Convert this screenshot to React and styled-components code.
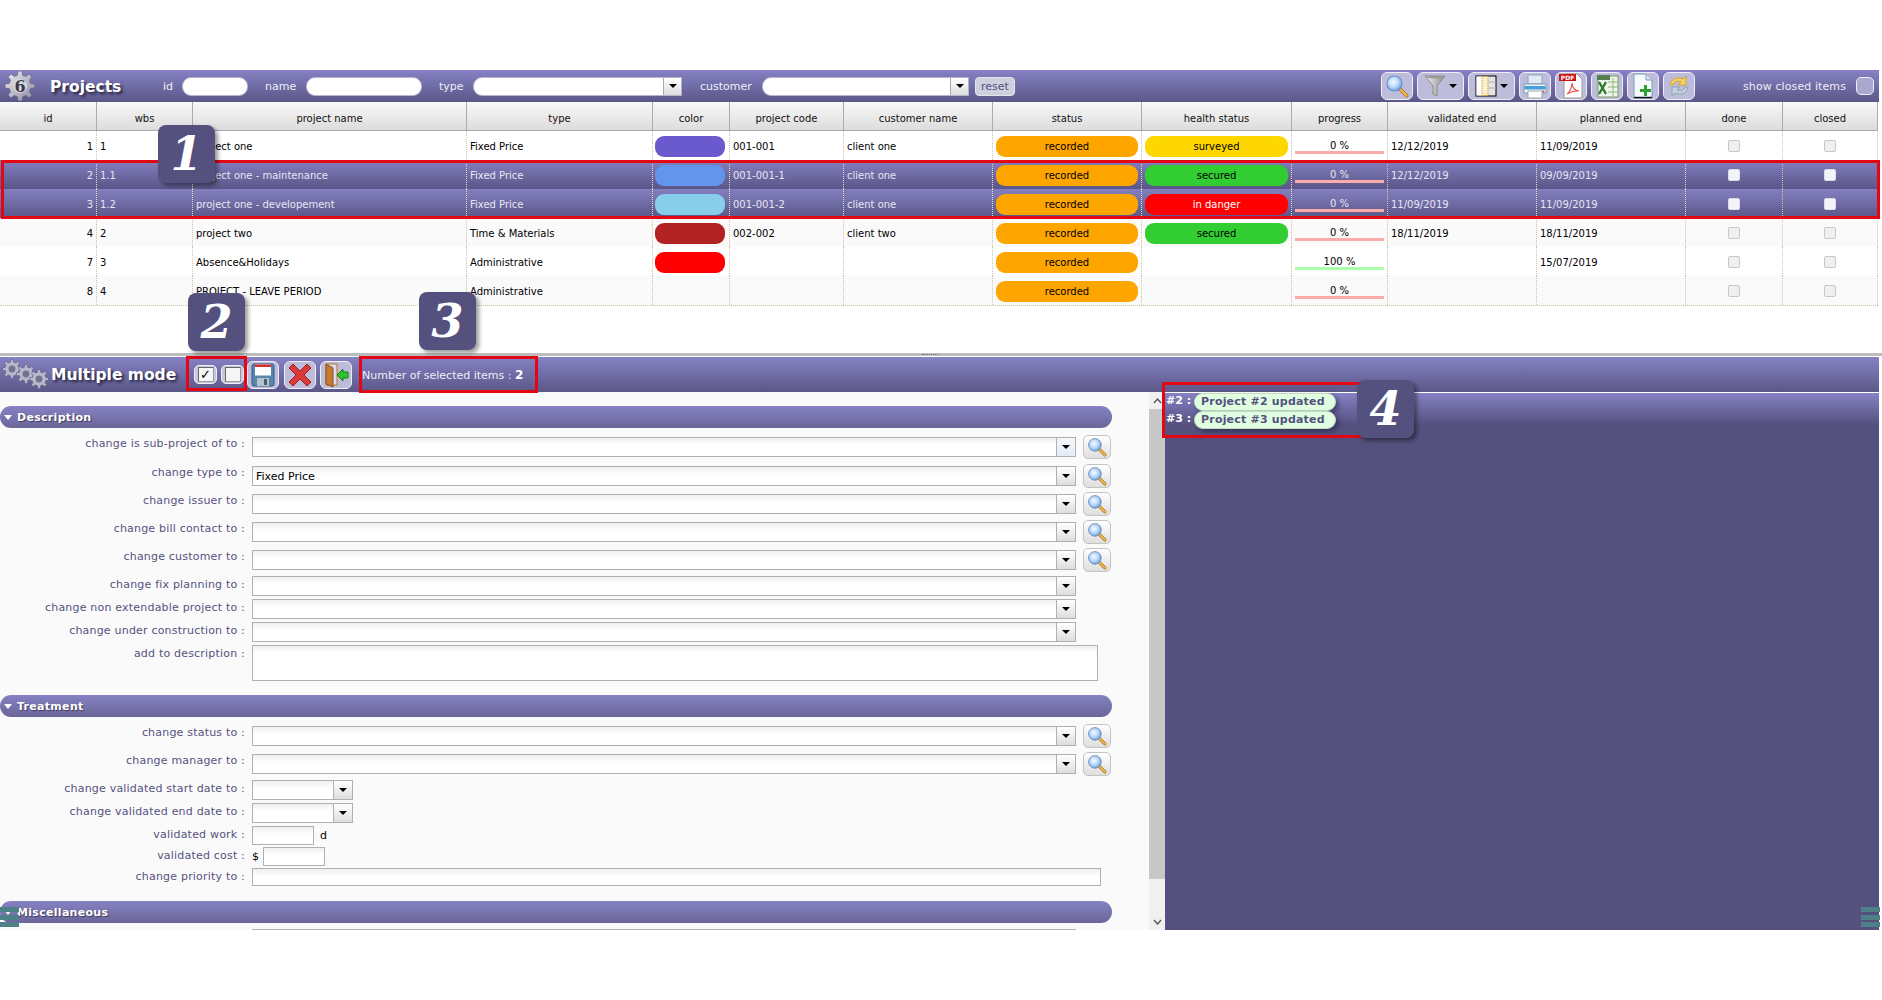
import React from 'react';
import styled, { createGlobalStyle } from 'styled-components';

const GlobalStyle = createGlobalStyle`
  html, body {
    margin: 0;
    background: #fff;
    overflow: hidden;
  }
  * { box-sizing: border-box; }
`;

const COLUMNS = '97px 96px 274px 186px 77px 114px 149px 149px 150px 96px 149px 149px 97px 95px';
const BAR = 'linear-gradient(#8682c4, #5b5788)';

const Page = styled.div`
  position: relative;
  width: 1882px;
  height: 1000px;
  padding-top: 70px;
  overflow: hidden;
  font-family: "DejaVu Sans", Verdana, sans-serif;
  font-size: 10px;
  color: #000;
`;

/* top toolbar */
const Toolbar = styled.div`
  display: flex;
  align-items: center;
  width: 1879px;
  height: 32px;
  background: ${BAR};
  color: #eeeef8;
`;

const Title = styled.div`
  margin-left: ${p => p.$left}px;
  padding-top: ${p => p.$drop || 0}px;
  width: ${p => p.$width}px;
  flex: none;
  font-size: ${p => p.$size}px;
  font-weight: bold;
  color: #fff;
  text-shadow: 2px 2px 3px #22203a;
  white-space: nowrap;
`;

const FilterLabel = styled.span`
  margin-left: ${p => p.$left}px;
  width: ${p => p.$width}px;
  flex: none;
  font-size: 11px;
`;

const FilterInput = styled.div`
  width: ${p => p.$width}px;
  height: 19px;
  flex: none;
  display: flex;
  justify-content: flex-end;
  background: #fff;
  border: 1px solid #b4b2cc;
  border-radius: ${p => (p.$select ? '9px 0 0 9px' : '9px')};
  overflow: hidden;
`;

const FilterArrow = styled.div`
  width: 18px;
  display: flex;
  align-items: center;
  justify-content: center;
  background: linear-gradient(#fff, #ddd);
  border-left: 1px solid #aaa;
`;

const Arrow = styled.i`
  display: block;
  width: 0;
  height: 0;
  border-left: 4px solid transparent;
  border-right: 4px solid transparent;
  border-top: 4px solid #000;
`;

const ResetButton = styled.div`
  margin-left: 6px;
  width: 40px;
  height: 19px;
  flex: none;
  display: flex;
  align-items: center;
  justify-content: center;
  background: #cfcfe0;
  color: #55527f;
  border: 1px solid #e4e4f0;
  border-radius: 4px;
  font-size: 11px;
`;

const RightTools = styled.div`
  display: flex;
  align-items: center;
  gap: 4px;
  margin-left: auto;
  padding-right: 5px;
`;

const ToolButton = styled.div`
  width: ${p => p.$width || 32}px;
  height: 28px;
  flex: none;
  display: flex;
  align-items: center;
  justify-content: center;
  gap: 3px;
  background: #bebcdb;
  border: 1px solid #eeeef8;
  border-radius: 6px;
`;

const ShowClosed = styled.span`
  margin-left: 44px;
  width: 103px;
  font-size: 11px;
  letter-spacing: .1px;
  white-space: nowrap;
`;

const BigCheck = styled.div`
  margin-left: 6px;
  width: 18px;
  height: 18px;
  background: #aaa8cf;
  border: 1px solid #eeeef8;
  border-radius: 5px;
`;

/* grid */
const GridArea = styled.div`
  height: 251px;
  width: 1878px;
`;

const Row = styled.div`
  display: grid;
  grid-template-columns: ${COLUMNS};
  height: 29px;
  background: ${p => (p.$selected ? 'linear-gradient(#8480c0, #5a5688)' : p.$even ? '#fafafa' : '#fff')};
  color: ${p => (p.$selected ? '#e6e6f2' : '#000')};
  &:last-child { border-bottom: 1px dotted #cfc3a5; height: 30px; }
`;

const HeaderRow = styled.div`
  display: grid;
  grid-template-columns: ${COLUMNS};
  height: 29px;
  background: linear-gradient(#f9f9f9, #dcdcdc);
  border-bottom: 1px solid #aaa;
`;

const HeaderCell = styled.div`
  display: flex;
  align-items: center;
  justify-content: center;
  padding-top: 4px;
  border-right: 1px solid #aaa;
  color: #111;
`;

const Cell = styled.div`
  display: flex;
  align-items: center;
  justify-content: ${p => p.$align || 'flex-start'};
  padding: 2px 3px 0 3px;
  border-right: 1px dotted ${p => (p.$light ? '#e6dcc0' : '#cfc3a5')};
  white-space: nowrap;
  min-width: 0;
`;

const Pill = styled.div`
  width: 100%;
  height: 21px;
  margin-top: -1px;
  margin-left: ${p => (p.$wide ? -1 : 0)}px;
  border-radius: 9px;
  display: flex;
  align-items: center;
  justify-content: center;
  background: ${p => p.$color};
  color: ${p => p.$text || '#000'};
`;

const ProgressCell = styled.div`
  display: flex;
  flex-direction: column;
  justify-content: flex-end;
  align-items: stretch;
  padding: 0 3px 6px 3px;
  border-right: 1px dotted #cfc3a5;
  text-align: center;
  line-height: 12px;
`;

const ProgressBar = styled.div`
  height: 3px;
  margin-top: -1px;
  background: ${p => (p.$full ? '#aaffaa' : '#ffaaaa')};
`;

const CheckCell = styled.div`
  display: flex;
  align-items: center;
  justify-content: center;
  border-right: 1px dotted #cfc3a5;
`;

const TinyCheck = styled.div`
  width: 12px;
  height: 12px;
  background: ${p => (p.$selected ? '#f4f4f8' : '#efefef')};
  border: 1px solid ${p => (p.$selected ? '#dcdcea' : '#c8c8c8')};
  border-radius: 2px;
`;

/* splitter */
const Splitter = styled.div`
  height: 4px;
  display: flex;
  align-items: center;
  padding-left: 922px;
  background: #bdbdbd;
  border-bottom: 1px solid #fff;
`;

const HandleDots = styled.div`
  width: 16px;
  height: 1px;
  border-top: 1px dotted #777;
`;

/* lower header */
const ModeBar = styled.div`
  display: flex;
  align-items: center;
  width: 1879px;
  height: 35px;
  background: ${BAR};
  color: #eeeef8;
`;

const SmallCheckButton = styled.div`
  width: 23px;
  height: 19px;
  flex: none;
  margin-left: ${p => p.$left}px;
  display: flex;
  align-items: center;
  justify-content: center;
  background: #c8c6e0;
  border: 1px solid #eeeef8;
  border-radius: 5px;
`;

const SmallCheckBox = styled.div`
  width: 16px;
  height: 15px;
  display: flex;
  align-items: center;
  justify-content: center;
  background: #f6f6f6;
  border: 1px solid #999;
  border-top-color: #666;
  border-left-color: #666;
  font-size: 13px;
  font-weight: bold;
  line-height: 1;
  color: #000;
`;

const ModeButton = styled(ToolButton)`
  margin-left: ${p => p.$left}px;
`;

const SelectedCount = styled.div`
  margin-left: 10px;
  font-size: 11px;
  white-space: nowrap;
  b { font-size: 12px; color: #fff; }
`;

/* lower body */
const Body = styled.div`
  display: flex;
  width: 1879px;
  height: 538px;
`;

const FormPanel = styled.div`
  width: 1149px;
  flex: none;
  padding-top: 14px;
  background: #fafafa;
  overflow: hidden;
`;

const SectionBar = styled.div`
  width: 1112px;
  height: 22px;
  margin-bottom: ${p => p.$after || 9}px;
  display: flex;
  align-items: center;
  padding-left: 4px;
  gap: 5px;
  background: linear-gradient(#8682c4, #6a6698);
  border-radius: 11px;
  color: #fff;
  font-size: 11px;
  font-weight: bold;
  letter-spacing: .3px;
  text-shadow: 1px 1px 1px #3c3a60;
`;

const SectionArrow = styled.i`
  display: block;
  width: 0;
  height: 0;
  border-left: 4px solid transparent;
  border-right: 4px solid transparent;
  border-top: 5px solid #fff;
`;

const FormRow = styled.div`
  display: flex;
  align-items: flex-start;
  height: ${p => p.$h}px;
  margin-bottom: ${p => p.$after || 0}px;
`;

const FieldLabel = styled.div`
  width: 245px;
  margin-right: 7px;
  padding-top: ${p => (p.$tight ? 2 : 0)}px;
  flex: none;
  text-align: right;
  color: #55527f;
  font-size: 11px;
  letter-spacing: .2px;
  line-height: 13px;
  white-space: nowrap;
`;

const FieldBox = styled.div`
  width: ${p => p.$width}px;
  height: ${p => p.$height || 20}px;
  flex: none;
  display: flex;
  align-items: stretch;
  background: linear-gradient(#efefef, #fff 7px);
  border: 1px solid #b0b0b0;
`;

const FieldValue = styled.div`
  flex: 1;
  padding: 2px 3px 0;
  font-size: 11px;
  line-height: 16px;
`;

const FieldArrow = styled.div`
  width: 19px;
  flex: none;
  display: flex;
  align-items: center;
  justify-content: center;
  border-left: 1px solid #b0b0b0;
  background: ${p => (p.$hover ? 'linear-gradient(#f4f8fc, #e2ecf6)' : 'linear-gradient(#fff, #ddd)')};
`;

const SearchButton = styled.div`
  width: 28px;
  height: 24px;
  margin: -2px 0 0 7px;
  flex: none;
  display: flex;
  align-items: center;
  justify-content: center;
  background: linear-gradient(#fff, #dedede);
  border: 1px solid #c4c4c4;
  border-radius: 5px;
`;

const Unit = styled.span`
  margin-left: ${p => p.$left}px;
  margin-right: ${p => p.$right || 0}px;
  padding-top: 2px;
  font-size: 11px;
  line-height: 15px;
`;

/* scroller + messages */
const ScrollBar = styled.div`
  width: 16px;
  flex: none;
  display: flex;
  flex-direction: column;
  background: #f0f0f0;
`;

const ScrollEnd = styled.div`
  height: 17px;
  display: flex;
  align-items: center;
  justify-content: center;
`;

const ScrollThumb = styled.div`
  height: 470px;
  background: #c8c8c8;
`;

const ScrollSpace = styled.div`
  flex: 1;
`;

const MessagePanel = styled.div`
  flex: 1;
  padding-left: 1px;
  background: linear-gradient(#8682c4, #54517f 32px);
  border-top: 1px solid #fff;
  color: #fff;
`;

const MessageRow = styled.div`
  display: flex;
  align-items: flex-start;
  height: 18px;
  font-size: 11px;
  font-weight: bold;
`;

const MessageId = styled.span`
  width: 28px;
  flex: none;
  padding-top: 1px;
  line-height: 13px;
`;

const MessagePill = styled.div`
  width: 142px;
  height: 18px;
  padding-left: 6px;
  background: #e0ffe0;
  color: #54517f;
  border: 1px solid #c4d8c4;
  border-radius: 9px;
  letter-spacing: .2px;
  line-height: 16px;
  box-shadow: 3px 3px 5px rgba(30, 28, 60, .5);
  white-space: nowrap;
`;

/* things drawn over the page */
const Mark = styled.div`
  position: absolute;
  left: ${p => p.$x}px;
  top: ${p => p.$y}px;
  width: ${p => p.$w}px;
  height: ${p => p.$h}px;
  border: 3px solid #e30613;
`;

const Badge = styled.div`
  position: absolute;
  left: ${p => p.$x}px;
  top: ${p => p.$y}px;
  width: 57px;
  height: 58px;
  display: flex;
  align-items: center;
  justify-content: center;
  background: #54517f;
  border-radius: 8px;
  box-shadow: 3px 3px 4px rgba(0, 0, 0, .4);
  color: #fff;
  font-family: "DejaVu Serif", "Liberation Serif", serif;
  font-size: 46px;
  font-weight: bold;
  font-style: italic;
  line-height: 1;
`;

const TealLines = styled.div`
  position: absolute;
  left: ${p => p.$x}px;
  top: 907px;
  width: 19px;
  height: 20px;
  display: flex;
  flex-direction: column;
  justify-content: space-between;
  i {
    display: block;
    height: 5px;
    background: #4d8089;
  }
`;

/* icons */
const gearPath = (cx, cy, outer, inner, teeth) => {
  const pts = [];
  const step = (Math.PI * 2) / teeth;
  for (let i = 0; i < teeth; i++) {
    const a = i * step;
    [[-0.3, inner], [-0.17, outer], [0.17, outer], [0.3, inner]].forEach(([o, r]) => {
      pts.push(`${(cx + Math.cos(a + o * step) * r).toFixed(1)} ${(cy + Math.sin(a + o * step) * r).toFixed(1)}`);
    });
  }
  return `M${pts.join('L')}Z`;
};

const GearLogo = () => (
  <svg width="32" height="30" viewBox="0 0 32 30" style={{ flex: 'none', marginLeft: 4 }}>
    <defs>
      <linearGradient id="gearFill" x1="0" y1="0" x2="1" y2="1">
        <stop offset="0" stopColor="#eeeef6" />
        <stop offset="1" stopColor="#8a889f" />
      </linearGradient>
    </defs>
    <path d={gearPath(16, 15, 15, 11, 8)} fill="url(#gearFill)" stroke="#5c5a78" strokeWidth=".6" />
    <circle cx="16" cy="15" r="7" fill="#d8d7e4" />
    <text x="16" y="21" textAnchor="middle" fontSize="16" fontWeight="bold" fontFamily="DejaVu Serif, serif" fill="#3a3840">6</text>
  </svg>
);

const TripleGear = () => (
  <svg width="48" height="32" viewBox="0 0 48 32" style={{ flex: 'none', marginLeft: 2 }}>
    {[[10, 10], [24, 15], [37, 20]].map(([x, y]) => (
      <g key={x}>
        <path d={gearPath(x, y, 9.5, 7, 8)} fill="#b8b8cc" stroke="#5c5a78" strokeWidth=".6" />
        <circle cx={x} cy={y} r="3.4" fill="#74728f" />
      </g>
    ))}
  </svg>
);

const Magnifier = ({ size = 24 }) => (
  <svg width={size} height={size} viewBox="0 0 24 24">
    <defs>
      <radialGradient id="lens" cx=".42" cy=".4" r=".65">
        <stop offset="0" stopColor="#f6fbff" />
        <stop offset=".55" stopColor="#b8d6f8" />
        <stop offset="1" stopColor="#5a90e0" />
      </radialGradient>
    </defs>
    <line x1="14.5" y1="14.5" x2="21.5" y2="21.5" stroke="#a8701c" strokeWidth="3.6" strokeLinecap="round" />
    <line x1="14.5" y1="14.5" x2="21.5" y2="21.5" stroke="#f2b84a" strokeWidth="2.2" strokeLinecap="round" />
    <circle cx="9.5" cy="9.5" r="7.5" fill="url(#lens)" stroke="#6c90c4" strokeWidth="1.2" />
  </svg>
);

const Funnel = () => (
  <svg width="22" height="24" viewBox="0 0 22 24">
    <defs>
      <linearGradient id="funnelFill" x1="0" y1="0" x2="1" y2="0">
        <stop offset="0" stopColor="#f2f2f2" />
        <stop offset="1" stopColor="#8c8c8c" />
      </linearGradient>
    </defs>
    <path d="M1 2h20L13 12v10l-4-2v-8z" fill="url(#funnelFill)" stroke="#8c8c8c" />
    <ellipse cx="11" cy="3" rx="9" ry="1.4" fill="#9a9a9a" />
  </svg>
);

const ColumnsIcon = () => (
  <svg width="22" height="22" viewBox="0 0 22 22">
    <rect x="1" y="1" width="20" height="20" fill="#e4e4e4" stroke="#000" />
    <rect x="1.5" y="1.5" width="5.5" height="19" fill="#fff" />
    <rect x="7" y="1.5" width="6" height="19" fill="#f8f0d0" stroke="#e09a1a" strokeDasharray="1.5 1" />
    <path d="M13.5 7H21M13.5 13H21" stroke="#aaa" />
  </svg>
);

const PrinterIcon = () => (
  <svg width="26" height="25" viewBox="0 0 26 25">
    <rect x="6" y="1" width="14" height="9" fill="#dfeaf6" stroke="#8fa6c0" />
    <path d="M2 10h22v9H2z" fill="#f0f4f8" stroke="#7b9ab4" />
    <rect x="2.5" y="12" width="21" height="3.5" fill="#4a9ed8" />
    <rect x="6" y="17" width="14" height="7" fill="#fff" stroke="#9aa" />
    <circle cx="21.5" cy="17.5" r="1" fill="#d33" />
  </svg>
);

const PdfIcon = () => (
  <svg width="26" height="26" viewBox="0 0 26 26">
    <path d="M6 1h13l5 5v19H6z" fill="#fff" stroke="#999" />
    <rect x="1" y="1" width="17" height="7" fill="#cc1414" />
    <text x="9.5" y="7" textAnchor="middle" fontSize="6" fontWeight="bold" fontFamily="DejaVu Sans, sans-serif" fill="#fff">PDF</text>
    <path d="M9 21c3-2 5-7 5-11 0 4 3 8 7 8-4 0-9 1-12 3z" fill="none" stroke="#e55" strokeWidth="1.2" />
  </svg>
);

const ExcelIcon = () => (
  <svg width="26" height="24" viewBox="0 0 26 24">
    <rect x="4" y="2" width="20" height="21" fill="#eef4e8" stroke="#7a9a6c" />
    <path d="M14 8h10M14 13h10M14 18h10M19 4v19" stroke="#8cb878" />
    <rect x="3" y="1" width="13" height="5" fill="#55804e" />
    <path d="M5 8l7 12M12 8L5 20" stroke="#2f7a32" strokeWidth="2.4" />
  </svg>
);

const NewDocIcon = () => (
  <svg width="24" height="26" viewBox="0 0 24 26">
    <path d="M3 1h12l6 6v18H3z" fill="#f6fafd" stroke="#7d9cba" />
    <path d="M15 1v6h6" fill="#d8e6f4" stroke="#7d9cba" />
    <path d="M3 24.5h18" stroke="#111" strokeWidth="1.4" />
    <path d="M13 12h3v4h4v3h-4v4h-3v-4H9v-3h4z" fill="#2ea12e" />
  </svg>
);

const RefreshIcon = () => (
  <svg width="28" height="26" viewBox="0 0 26 26" fill="none">
    <path d="M4 12C5 6 11 3 17 6l3-3v9h-8l3-3c-4-2-7 0-8 3z" fill="#f6cf68" stroke="#d8a030" />
    <path d="M22 14c-1 6-7 9-13 6l-3 3v-9h8l-3 3c4 2 7 0 8-3z" fill="#c4d2de" stroke="#8ea4b8" />
  </svg>
);

const SaveIcon = () => (
  <svg width="24" height="24" viewBox="0 0 24 24">
    <rect x="1" y="1" width="22" height="22" rx="2" fill="#5a86ac" stroke="#2c5a84" />
    <rect x="4" y="1.5" width="16" height="11" fill="#fff" />
    <rect x="4" y="1.5" width="16" height="2.5" fill="#d92c2c" />
    <rect x="6" y="15" width="12" height="8" fill="#b6c2cc" />
    <rect x="13" y="16" width="3" height="6" fill="#4c5c6c" />
  </svg>
);

const CrossIcon = () => (
  <svg width="24" height="24" viewBox="0 0 24 24">
    <path d="M5 1l7 7 7-7 4 4-7 7 7 7-4 4-7-7-7 7-4-4 7-7-7-7z" fill="#d83a3a" stroke="#a02020" strokeLinejoin="round" />
  </svg>
);

const DoorIcon = () => (
  <svg width="26" height="26" viewBox="0 0 26 26">
    <path d="M3 2h11v21H3z" fill="#dcdcec" stroke="#b8742c" />
    <path d="M3 2l7 4v19l-7-3z" fill="#c87a30" stroke="#8c5218" />
    <path d="M14 13l6-6v3h5v6h-5v3z" fill="#2fc22f" stroke="#168016" />
  </svg>
);

/* data */
const GRID_HEADERS = ['id', 'wbs', 'project name', 'type', 'color', 'project code', 'customer name', 'status', 'health status', 'progress', 'validated end', 'planned end', 'done', 'closed'];

const HEALTH = {
  surveyed: { color: '#ffd700' },
  secured: { color: '#32cd32' },
  'in danger': { color: '#ff0000', text: '#fff' },
};

const PROJECTS = [
  { id: 1, wbs: '1', name: 'project one', type: 'Fixed Price', color: '#6a5acd', code: '001-001', customer: 'client one', health: 'surveyed', progress: 0, validated: '12/12/2019', planned: '11/09/2019' },
  { id: 2, wbs: '1.1', name: 'project one - maintenance', type: 'Fixed Price', color: '#6495ed', code: '001-001-1', customer: 'client one', health: 'secured', progress: 0, validated: '12/12/2019', planned: '09/09/2019', selected: true },
  { id: 3, wbs: '1.2', name: 'project one - developement', type: 'Fixed Price', color: '#87ceeb', code: '001-001-2', customer: 'client one', health: 'in danger', progress: 0, validated: '11/09/2019', planned: '11/09/2019', selected: true },
  { id: 4, wbs: '2', name: 'project two', type: 'Time & Materials', color: '#b22222', code: '002-002', customer: 'client two', health: 'secured', progress: 0, validated: '18/11/2019', planned: '18/11/2019' },
  { id: 7, wbs: '3', name: 'Absence&Holidays', type: 'Administrative', color: '#ff0000', progress: 100, planned: '15/07/2019' },
  { id: 8, wbs: '4', name: 'PROJECT - LEAVE PERIOD', type: 'Administrative', progress: 0 },
];

const DESCRIPTION_FIELDS = [
  { label: 'change is sub-project of to :', h: 29, search: true, hover: true },
  { label: 'change type to :', h: 28, search: true, value: 'Fixed Price' },
  { label: 'change issuer to :', h: 28, search: true },
  { label: 'change bill contact to :', h: 28, search: true },
  { label: 'change customer to :', h: 26, search: true },
  { label: 'change fix planning to :', h: 23, tight: true },
  { label: 'change non extendable project to :', h: 23, tight: true },
  { label: 'change under construction to :', h: 23, tight: true },
];

const ProjectRow = ({ project, even }) => {
  const { selected } = project;
  const health = HEALTH[project.health];
  return (
    <Row $selected={selected} $even={even}>
      <Cell $align="flex-end" $light={selected}>{project.id}</Cell>
      <Cell $light={selected}>{project.wbs}</Cell>
      <Cell $light={selected}>{project.name}</Cell>
      <Cell $light={selected}>{project.type}</Cell>
      <Cell $light={selected}>{project.color && <Pill $wide $color={project.color} />}</Cell>
      <Cell $light={selected}>{project.code}</Cell>
      <Cell $light={selected}>{project.customer}</Cell>
      <Cell $light={selected}><Pill $color="#ffa500">recorded</Pill></Cell>
      <Cell $light={selected}>{health && <Pill $color={health.color} $text={health.text}>{project.health}</Pill>}</Cell>
      <ProgressCell>
        <span>{project.progress} %</span>
        <ProgressBar $full={project.progress === 100} />
      </ProgressCell>
      <Cell $light={selected}>{project.validated}</Cell>
      <Cell $light={selected}>{project.planned}</Cell>
      <CheckCell><TinyCheck $selected={selected} /></CheckCell>
      <CheckCell><TinyCheck $selected={selected} /></CheckCell>
    </Row>
  );
};

const SelectField = ({ label, h, search, hover, value, width = 824, tight, after }) => (
  <FormRow $h={h} $after={after}>
    <FieldLabel $tight={tight}>{label}</FieldLabel>
    <FieldBox $width={width}>
      <FieldValue>{value}</FieldValue>
      <FieldArrow $hover={hover}><Arrow /></FieldArrow>
    </FieldBox>
    {search && <SearchButton><Magnifier size={20} /></SearchButton>}
  </FormRow>
);

const App = () => (
  <Page>
    <GlobalStyle />

    <Toolbar>
      <GearLogo />
      <Title $left={14} $width={113} $size={15.5} $drop={2}>Projects</Title>
      <FilterLabel $left={0} $width={19}>id</FilterLabel>
      <FilterInput $width={66} />
      <FilterLabel $left={17} $width={41}>name</FilterLabel>
      <FilterInput $width={116} />
      <FilterLabel $left={17} $width={34}>type</FilterLabel>
      <FilterInput $width={209} $select><FilterArrow><Arrow /></FilterArrow></FilterInput>
      <FilterLabel $left={18} $width={62}>customer</FilterLabel>
      <FilterInput $width={207} $select><FilterArrow><Arrow /></FilterArrow></FilterInput>
      <ResetButton>reset</ResetButton>
      <RightTools>
        <ToolButton><Magnifier /></ToolButton>
        <ToolButton $width={47}><Funnel /><Arrow /></ToolButton>
        <ToolButton $width={47}><ColumnsIcon /><Arrow /></ToolButton>
        <ToolButton><PrinterIcon /></ToolButton>
        <ToolButton><PdfIcon /></ToolButton>
        <ToolButton><ExcelIcon /></ToolButton>
        <ToolButton><NewDocIcon /></ToolButton>
        <ToolButton><RefreshIcon /></ToolButton>
        <ShowClosed>show closed items</ShowClosed>
        <BigCheck />
      </RightTools>
    </Toolbar>

    <GridArea>
      <HeaderRow>
        {GRID_HEADERS.map(name => <HeaderCell key={name}>{name}</HeaderCell>)}
      </HeaderRow>
      {PROJECTS.map((project, i) => (
        <ProjectRow key={project.id} project={project} even={i % 2 === 1} />
      ))}
    </GridArea>

    <Splitter><HandleDots /></Splitter>

    <ModeBar>
      <TripleGear />
      <Title $left={1} $width={143} $size={15.5}>Multiple mode</Title>
      <SmallCheckButton $left={0}><SmallCheckBox>✓</SmallCheckBox></SmallCheckButton>
      <SmallCheckButton $left={4}><SmallCheckBox /></SmallCheckButton>
      <ModeButton $left={3}><SaveIcon /></ModeButton>
      <ModeButton $left={5}><CrossIcon /></ModeButton>
      <ModeButton $left={4}><DoorIcon /></ModeButton>
      <SelectedCount>Number of selected items : <b>2</b></SelectedCount>
    </ModeBar>

    <Body>
      <FormPanel>
        <SectionBar><SectionArrow />Description</SectionBar>
        {DESCRIPTION_FIELDS.map(field => <SelectField key={field.label} {...field} />)}
        <FormRow $h={36} $after={14}>
          <FieldLabel $tight>add to description :</FieldLabel>
          <FieldBox $width={846} $height={36} />
        </FormRow>

        <SectionBar><SectionArrow />Treatment</SectionBar>
        <SelectField label="change status to :" h={28} search />
        <SelectField label="change manager to :" h={26} search />
        <SelectField label="change validated start date to :" h={23} width={101} tight />
        <SelectField label="change validated end date to :" h={23} width={101} tight />
        <FormRow $h={21}>
          <FieldLabel $tight>validated work :</FieldLabel>
          <FieldBox $width={62} $height={19} />
          <Unit $left={6}>d</Unit>
        </FormRow>
        <FormRow $h={21}>
          <FieldLabel $tight>validated cost :</FieldLabel>
          <Unit $left={0} $right={4}>$</Unit>
          <FieldBox $width={62} $height={19} />
        </FormRow>
        <FormRow $h={18} $after={15}>
          <FieldLabel $tight>change priority to :</FieldLabel>
          <FieldBox $width={849} $height={18} />
        </FormRow>

        <SectionBar $after={6}><SectionArrow />Miscellaneous</SectionBar>
        <FormRow $h={20}>
          <FieldLabel />
          <FieldBox $width={824} />
        </FormRow>
      </FormPanel>

      <ScrollBar>
        <ScrollEnd><svg width="9" height="6" viewBox="0 0 9 6" fill="none" stroke="#555" strokeWidth="1.4"><path d="M1 5l3.5-4L8 5" /></svg></ScrollEnd>
        <ScrollThumb />
        <ScrollSpace />
        <ScrollEnd><svg width="9" height="6" viewBox="0 0 9 6" fill="none" stroke="#555" strokeWidth="1.4"><path d="M1 1l3.5 4L8 1" /></svg></ScrollEnd>
      </ScrollBar>

      <MessagePanel>
        <MessageRow><MessageId>#2 :</MessageId><MessagePill>Project #2 updated</MessagePill></MessageRow>
        <MessageRow><MessageId>#3 :</MessageId><MessagePill>Project #3 updated</MessagePill></MessageRow>
      </MessagePanel>
    </Body>

    <Mark $x={1} $y={160} $w={1879} $h={59} />
    <Mark $x={186} $y={356} $w={61} $h={35} />
    <Mark $x={359} $y={356} $w={179} $h={37} />
    <Mark $x={1162} $y={382} $w={208} $h={56} />

    <Badge $x={158} $y={125}>1</Badge>
    <Badge $x={188} $y={293}>2</Badge>
    <Badge $x={419} $y={292}>3</Badge>
    <Badge $x={1357} $y={380}>4</Badge>

    <TealLines $x={0}><i /><i /><i /></TealLines>
    <TealLines $x={1861}><i /><i /><i /></TealLines>
  </Page>
);

export default App;
